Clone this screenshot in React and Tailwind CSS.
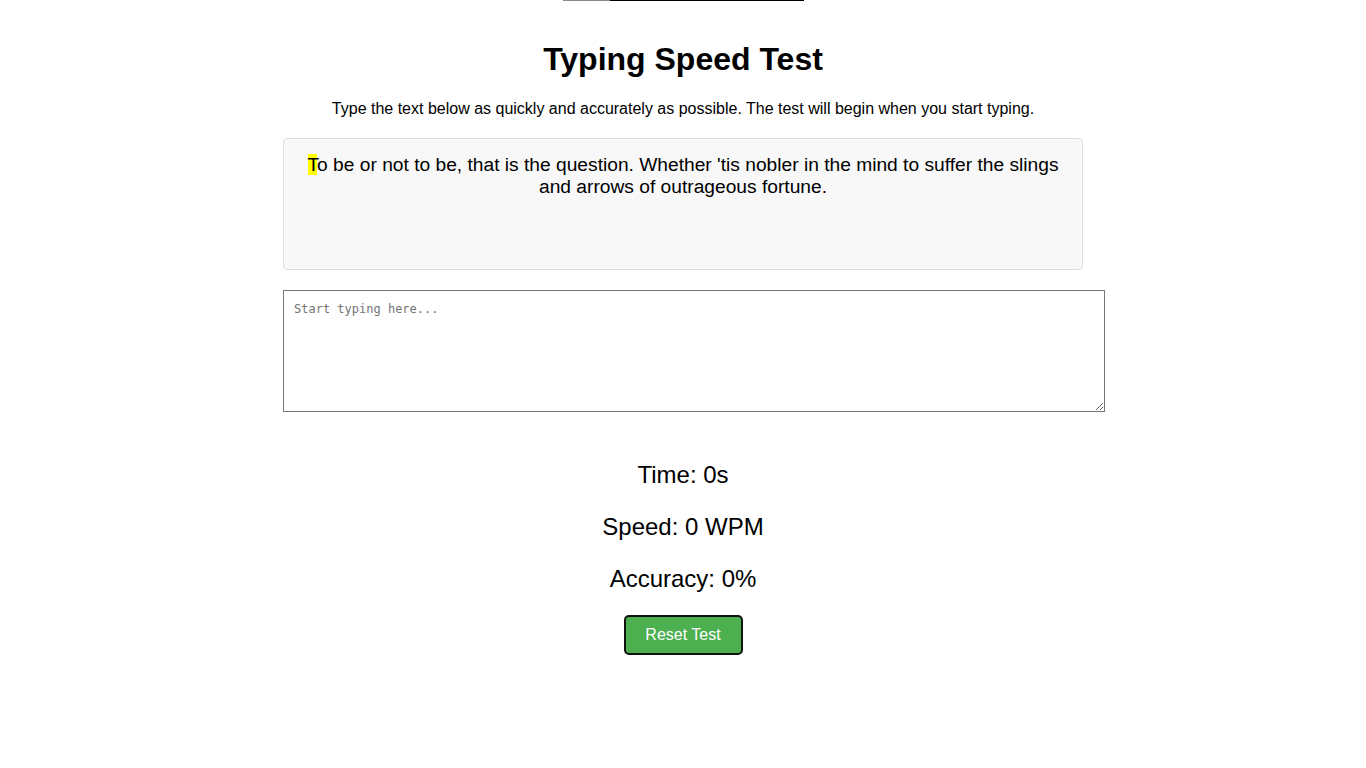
import React, { useState } from 'react'

const sample =
  "To be or not to be, that is the question. Whether 'tis nobler in the mind to suffer the slings and arrows of outrageous fortune."

export default function App() {
  const [typed, setTyped] = useState('')

  return (
    <div className="min-h-screen bg-white text-black font-['Liberation_Sans',Arial,sans-serif]">
      {/* stray rule at the very top */}
      <div className="flex justify-center">
        <div className="flex h-px w-[241px]">
          <div className="w-[47px] bg-[#8a8a8a]" />
          <div className="flex-1 bg-black" />
        </div>
      </div>

      <div className="mx-auto w-[800px] text-center">
        <h1 className="mt-[40px] text-[32px] font-bold leading-[37px]">Typing Speed Test</h1>
        <p className="mt-[22px] text-[16px] leading-[18px]">
          Type the text below as quickly and accurately as possible. The test will begin when you start typing.
        </p>

        <div className="mt-[20px] box-border h-[132px] rounded-[4px] border border-[#dddddd] bg-[#f8f8f8] px-[15px] py-[15px] text-[19.2px] leading-[22px]">
          <span className="bg-[#ffff00]">{sample[0]}</span>
          {sample.slice(1)}
        </div>

        <textarea
          value={typed}
          onChange={(e) => setTyped(e.target.value)}
          placeholder="Start typing here..."
          className="mt-[20px] block h-[122px] w-[822px] resize-y border border-[#767676] p-[10px] font-['DejaVu_Sans_Mono',Consolas,monospace] text-[12px] leading-[17px] placeholder:text-[#757575] focus:outline-none"
        />

        <div className="mt-[49px] flex flex-col gap-[24px] text-[24px] leading-[28px]">
          <p>Time: 0s</p>
          <p>Speed: 0 WPM</p>
          <p>Accuracy: 0%</p>
        </div>

        <button
          onClick={() => setTyped('')}
          className="mt-[22px] h-[40px] w-[119px] rounded-[5px] border-2 border-[#111111] bg-[#4caf50] text-[16px] text-white"
        >
          Reset Test
        </button>
      </div>
    </div>
  )
}
